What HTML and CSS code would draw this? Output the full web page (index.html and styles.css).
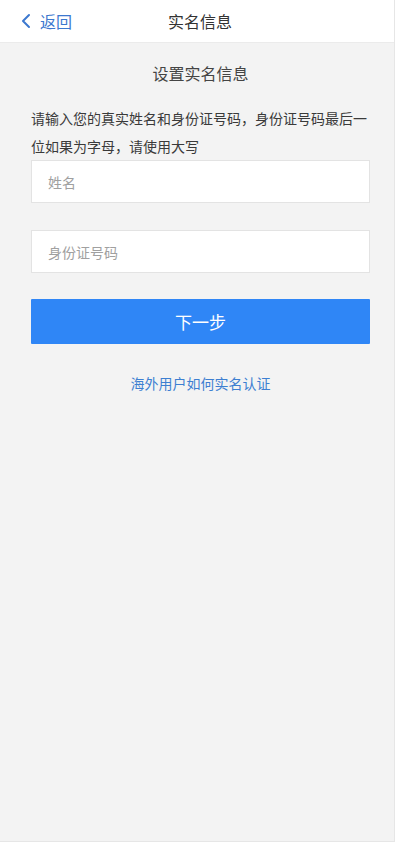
FILE: index.html
```html
<!DOCTYPE html>
<html lang="zh">
<head>
<meta charset="utf-8">
<title>实名信息</title>
<link rel="stylesheet" href="styles.css">
</head>
<body>
<div class="page">
  <header class="topbar">
    <a class="back">
      <svg class="chev" width="10" height="16" viewBox="0 0 10 16"><polyline points="8,2 2,8 8,14" fill="none" stroke="#3c78cf" stroke-width="2" stroke-linecap="round" stroke-linejoin="round"/></svg>
      <span>返回</span>
    </a>
    <div class="title">实名信息</div>
  </header>
  <main class="content">
    <h2 class="subtitle">设置实名信息</h2>
    <p class="desc">请输入您的真实姓名和身份证号码，身份证号码最后一位如果为字母，请使用大写</p>
    <div class="field"><span class="ph">姓名</span></div>
    <div class="field last"><span class="ph">身份证号码</span></div>
    <button class="btn">下一步</button>
    <div class="link">海外用户如何实名认证</div>
  </main>
</div>
</body>
</html>
```

FILE: styles.css
```css
html, body {
  margin: 0;
  padding: 0;
  background: #fff;
}
body {
  font-family: "Noto Sans CJK SC", "Liberation Sans", sans-serif;
  color: #333;
}
.page {
  width: 394px;
  height: 841px;
  background: #f3f3f3;
  border-right: 1px solid #e6e6e6;
  border-bottom: 1px solid #e6e6e6;
  display: flex;
  flex-direction: column;
}
.topbar {
  height: 42px;
  background: #fff;
  border-bottom: 1px solid #ebebeb;
  position: relative;
  display: flex;
  align-items: center;
  justify-content: center;
}
.back {
  position: absolute;
  left: 21px;
  top: 0;
  height: 42px;
  display: flex;
  align-items: center;
  gap: 9px;
  color: #3c78cf;
  font-size: 16px;
}
.chev { display: block; }
.title {
  font-size: 16px;
  color: #333;
  padding-left: 6px;
}
.content {
  padding: 0 24px 0 31px;
  display: flex;
  flex-direction: column;
}
.subtitle {
  margin: 18px 0 0;
  font-weight: normal;
  font-size: 16px;
  line-height: 24px;
  text-align: center;
  color: #444;
}
.desc {
  margin: 19px 0 0;
  font-size: 14px;
  line-height: 28px;
  color: #3a3a3a;
  width: 339px;
}
.field {
  width: 337px;
  height: 41px;
  background: #fff;
  border: 1px solid #e3e3e3;
  display: flex;
  align-items: center;
  margin-bottom: 27px;
}
.field.last { margin-bottom: 26px; }
.ph {
  padding-left: 16px;
  font-size: 14px;
  color: #a0a0a0;
}
.btn {
  width: 339px;
  height: 45px;
  border: none;
  background: #2f86f6;
  color: #fff;
  font-family: inherit;
  font-size: 17px;
  padding: 0;
  margin: 0;
  border-radius: 1px;
}
.link {
  margin-top: 29px;
  width: 339px;
  text-align: center;
  font-size: 14px;
  line-height: 20px;
  color: #3d7fd1;
}
```
